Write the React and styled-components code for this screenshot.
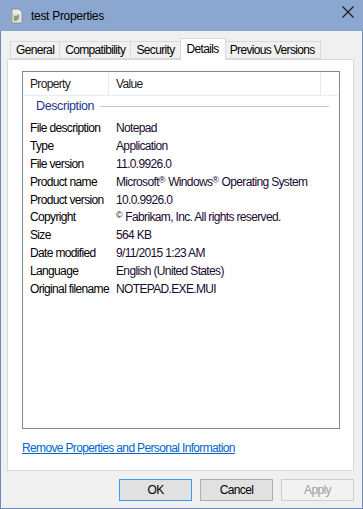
import React from 'react';
import styled, { createGlobalStyle } from 'styled-components';

const Global = createGlobalStyle`
  html, body { margin: 0; padding: 0; background: #fff; }
  * { box-sizing: border-box; }
`;

const Window = styled.div`
  width: 363px;
  height: 509px;
  border: 1px solid #6f89b5;
  border-top: none;
  background: #f0f0f0;
  display: flex;
  flex-direction: column;
  font-family: "Liberation Sans", Arial, sans-serif;
  font-size: 12px;
  letter-spacing: -0.65px;
  color: #000;
`;

const TitleBar = styled.div`
  height: 31px;
  margin: 0 -1px;
  background: #8ba7cf;
  display: flex;
  align-items: center;
  padding: 0 8px 0 10px;
  gap: 8px;
`;

const TitleText = styled.span`
  flex: 1;
  font-size: 12px;
  letter-spacing: -0.3px;
  color: #000;
`;

const CloseBtn = styled.div`
  width: 14px;
  height: 14px;
  margin-top: -7px;
  display: flex;
`;

const Body = styled.div`
  flex: 1;
  display: flex;
  flex-direction: column;
  padding: 7px 8px 0 6px;
`;

const TabStrip = styled.div`
  display: flex;
  align-items: flex-end;
  padding-left: 3px;
  height: 21px;
  position: relative;
  z-index: 1;
`;

const Tab = styled.div`
  height: ${p => (p.$active ? '22px' : '18px')};
  margin-bottom: ${p => (p.$active ? '-1px' : '0')};
  padding: ${p => (p.$active ? '0 6px 2px' : '0 5px')};
  margin-left: ${p => (p.$active ? '-1px' : '0')};
  margin-right: ${p => (p.$active ? '-1px' : '0')};
  border: 1px solid #d9d9d9;
  border-bottom: ${p => (p.$active ? 'none' : '1px solid #d9d9d9')};
  border-left: ${p => (p.$first || p.$active ? '1px solid #d9d9d9' : 'none')};
  background: ${p => (p.$active ? '#fff' : '#f0f0f0')};
  display: flex;
  align-items: center;
  white-space: nowrap;
  position: relative;
  z-index: ${p => (p.$active ? 2 : 1)};
`;

const Panel = styled.div`
  height: 412px;
  background: #fff;
  border: 1px solid #d9d9d9;
  padding: 11px 13px 0 14px;
  display: flex;
  flex-direction: column;
`;

const ListBox = styled.div`
  height: 358px;
  border: 1px solid #828790;
  background: #fff;
  display: flex;
  flex-direction: column;
`;

const HeaderRow = styled.div`
  display: grid;
  grid-template-columns: 86px 212px 1fr;
  height: 24px;
  border-bottom: 1px solid #e5eefa;
`;

const HeaderCell = styled.div`
  display: flex;
  align-items: center;
  padding-left: 7px;
  border-right: 1px solid #e3eaf6;
  color: #1a1a1a;
`;

const GroupHeader = styled.div`
  display: flex;
  align-items: center;
  gap: 6px;
  height: 20px;
  padding: 0 10px 0 13px;
  color: #1e3491;
  font-size: 12.5px;
  letter-spacing: -0.4px;
`;

const GroupLine = styled.div`
  flex: 1;
  height: 1px;
  background: #b7c7e6;
`;

const Rows = styled.div`
  display: flex;
  flex-direction: column;
  padding-top: 3px;
`;

const Row = styled.div`
  display: grid;
  grid-template-columns: 86px 1fr;
  height: 17.9px;
  align-items: center;
  padding-left: 7px;
  white-space: nowrap;
`;

const Cell = styled.span`
  color: ${p => (p.$value ? '#1a0a2e' : '#000')};
`;

const Reg = styled.span`
  font-size: 9px;
  vertical-align: 3px;
  letter-spacing: 0;
`;

const LinkRow = styled.div`
  height: 38px;
  display: flex;
  align-items: center;
`;

const Link = styled.a`
  color: #0066cc;
  text-decoration: underline;
  cursor: pointer;
`;

const ButtonRow = styled.div`
  display: flex;
  justify-content: flex-end;
  gap: 8px;
  padding-top: 8px;
`;

const Button = styled.button`
  width: 73px;
  height: 22px;
  font-family: inherit;
  font-size: 12px;
  letter-spacing: inherit;
  background: ${p => (p.$disabled ? '#f2f2f2' : '#e1e1e1')};
  color: ${p => (p.$disabled ? '#a0a0a0' : '#000')};
  border: 1px solid ${p => (p.$default ? '#3c9bf0' : p.$disabled ? '#cccccc' : '#adadad')};
  padding: 0;
`;

const FileIcon = () => (
  <svg width="13" height="16" viewBox="0 0 13 16">
    <path d="M2 1h7l3 3v11H2z" fill="#eaeaea" stroke="#8d8d8d" />
    <path d="M3 6h7v7H3z" fill="#cfd8d2" />
    <path d="M4 8h3v5H4z" fill="#7aa86b" />
    <path d="M7 7h2v4H7z" fill="#9a9a9a" />
    <path d="M1 3v12" stroke="#a8a8a8" />
  </svg>
);

const CloseIcon = () => (
  <svg width="14" height="14" viewBox="0 0 14 14">
    <path d="M1.5 1.5l11 11M12.5 1.5l-11 11" stroke="#1a1a1a" strokeWidth="1.1" />
  </svg>
);

const rows = [
  ['File description', 'Notepad'],
  ['Type', 'Application'],
  ['File version', '11.0.9926.0'],
  ['Product name', <>Microsoft<Reg>®</Reg> Windows<Reg>®</Reg> Operating System</>],
  ['Product version', '10.0.9926.0'],
  ['Copyright', <><Reg>©</Reg> Fabrikam, Inc. All rights reserved.</>],
  ['Size', '564 KB'],
  ['Date modified', '9/11/2015 1:23 AM'],
  ['Language', 'English (United States)'],
  ['Original filename', 'NOTEPAD.EXE.MUI'],
];

const tabs = ['General', 'Compatibility', 'Security', 'Details', 'Previous Versions'];

export default function App() {
  return (
    <>
      <Global />
      <Window>
        <TitleBar>
          <FileIcon />
          <TitleText>test Properties</TitleText>
          <CloseBtn><CloseIcon /></CloseBtn>
        </TitleBar>
        <Body>
          <TabStrip>
            {tabs.map((t, i) => (
              <Tab key={t} $first={i === 0} $active={t === 'Details'}>{t}</Tab>
            ))}
          </TabStrip>
          <Panel>
            <ListBox>
              <HeaderRow>
                <HeaderCell>Property</HeaderCell>
                <HeaderCell>Value</HeaderCell>
                <div />
              </HeaderRow>
              <GroupHeader>
                Description
                <GroupLine />
              </GroupHeader>
              <Rows>
                {rows.map(([k, v]) => (
                  <Row key={k}>
                    <Cell>{k}</Cell>
                    <Cell $value>{v}</Cell>
                  </Row>
                ))}
              </Rows>
            </ListBox>
            <LinkRow>
              <Link>Remove Properties and Personal Information</Link>
            </LinkRow>
          </Panel>
          <ButtonRow>
            <Button $default>OK</Button>
            <Button>Cancel</Button>
            <Button $disabled>Apply</Button>
          </ButtonRow>
        </Body>
      </Window>
    </>
  );
}
